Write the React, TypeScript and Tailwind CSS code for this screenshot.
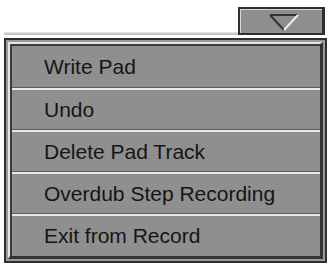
const items = ['Write Pad', 'Undo', 'Delete Pad Track', 'Overdub Step Recording', 'Exit from Record'];

export default function App() {
  return (
    <div className="w-[332px] h-[268px] bg-white overflow-hidden font-['Liberation_Sans',Arial,sans-serif]">
      <div className="flex items-end pl-[4px] pr-[7px] pt-[7px]">
        <div className="flex-1 h-[3px] bg-[#c6c6c6] border-t border-[#e2e2e2]" />
        <div className="w-[87px] h-[28px] border-2 border-[#2e2e2e] bg-[#8e8e8e] border-r-[3px]">
          <div className="h-full border-l border-t border-[#d8d8d8] flex items-start justify-center pt-[3px]">
            <svg width="32" height="19" viewBox="0 0 32 19" className="ml-[4px]">
              <path d="M2 2 L30 2" stroke="#333" strokeWidth="2" />
              <path d="M2 2 L16 17" stroke="#333" strokeWidth="2" />
              <path d="M30 2 L16 17" stroke="#eeeeee" strokeWidth="2" />
            </svg>
          </div>
        </div>
      </div>
      <div className="mt-[3px] ml-[4px] mr-[5px] border-2 border-[#2e2e2e] p-[2px] bg-[#9a9a9a]">
        <div className="border-l-2 border-t-2 border-[#e6e6e6] border-r-[3px] border-b-[3px] border-r-[#333] border-b-[#333]">
          <div className="border-l-2 border-t-2 border-[#3c3c3c]">
            {items.map((t) => (
              <div
                key={t}
                className="h-[42px] bg-[#8f8f8f] border-t-2 border-t-[#e8e8e8] first:border-t-0 border-b border-b-[#5c5c5c] last:border-b-0 flex items-center pl-[32px] text-[21px] text-[#151515]"
              >
                {t}
              </div>
            ))}
          </div>
        </div>
      </div>
    </div>
  );
}
